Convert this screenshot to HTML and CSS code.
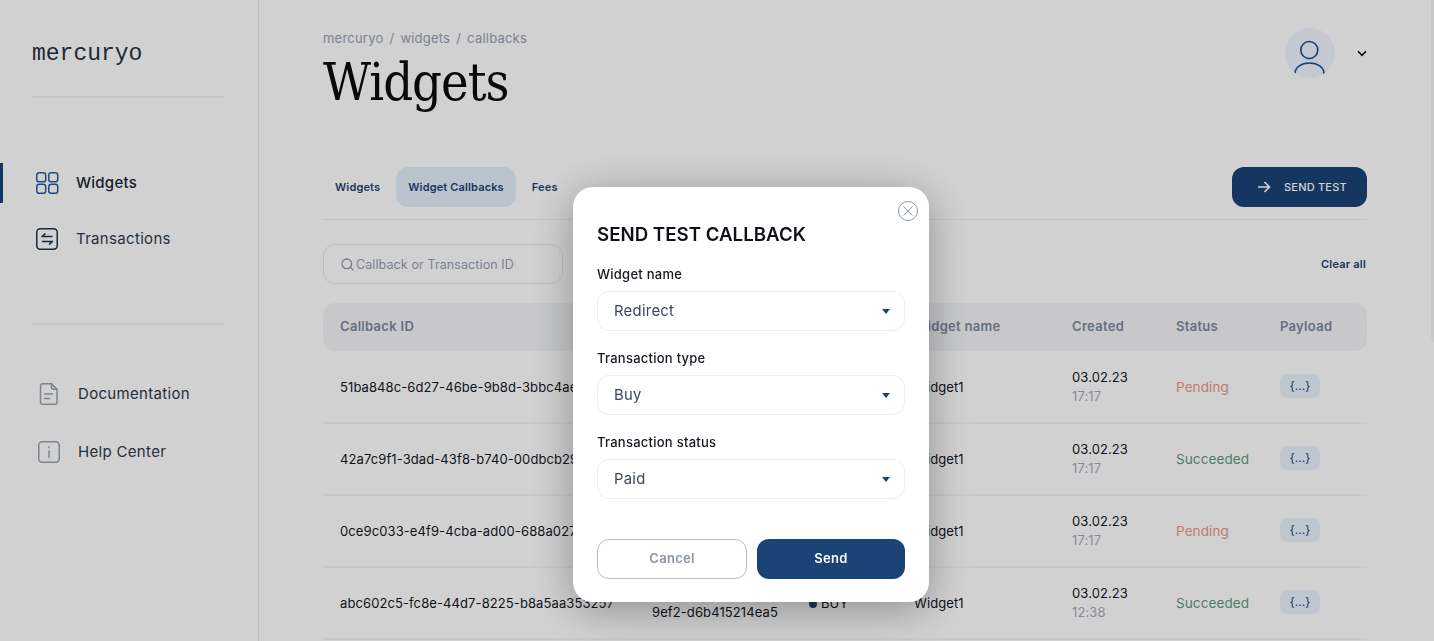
FILE: index.html
```html
<!DOCTYPE html>
<html lang="en">
<head>
<meta charset="utf-8">
<title>Widgets</title>
<link rel="stylesheet" href="styles.css">
</head>
<body>
<div class="app">
  <aside class="sidebar">
    <div class="logo">mercuryo</div>
    <hr class="side-rule">
    <nav class="nav nav-main">
      <a class="nav-item active">
        <svg class="nav-icon" width="24" height="24" viewBox="0 0 24 24" fill="none" stroke="#2b5c9c" stroke-width="1.5"><rect x="1.75" y="1.75" width="9" height="9" rx="2.6"/><rect x="13.75" y="1.75" width="9" height="9" rx="2.6"/><rect x="1.75" y="13.25" width="9" height="9" rx="2.6"/><rect x="13.75" y="13.25" width="9" height="9" rx="2.6"/></svg>
        <span>Widgets</span>
      </a>
      <a class="nav-item">
        <svg class="nav-icon" width="24" height="24" viewBox="0 0 24 24" fill="none" stroke="#1f3350" stroke-width="1.5"><rect x="1.75" y="1.75" width="20.5" height="20.5" rx="3.5"/><path d="M7 9.500h10M7 9.500l3-2.600M17.500 14.500h-10M17.500 14.500l-3 2.600" stroke-linecap="round" stroke-linejoin="round"/></svg>
        <span>Transactions</span>
      </a>
    </nav>
    <hr class="side-rule rule-second">
    <nav class="nav nav-secondary">
      <a class="nav-item small">
        <svg class="nav-icon" width="24" height="24" viewBox="0 0 24 24" fill="none" stroke="#98a0b2" stroke-width="1.5"><path d="M5.500 1.750h9l5.500 5.500v13a2 2 0 0 1-2 2h-12.500a2 2 0 0 1-2-2v-16.500a2 2 0 0 1 2-2z"/><path d="M14.500 1.750v3.500a2 2 0 0 0 2 2h3.500M7.500 12h8M7.500 16.500h5" stroke-linecap="round"/></svg>
        <span>Documentation</span>
      </a>
      <a class="nav-item small">
        <svg class="nav-icon" width="24" height="24" viewBox="0 0 24 24" fill="none" stroke="#98a0b2" stroke-width="1.500"><rect x="1.750" y="1.750" width="20.500" height="20.500" rx="3.500"/><path d="M12 11v6.500M12 6.800v1" stroke-linecap="round"/></svg>
        <span>Help Center</span>
      </a>
    </nav>
  </aside>

  <main class="main">
    <header class="page-head">
      <div>
        <div class="crumbs"><span>mercuryo</span><span>/</span><span>widgets</span><span>/</span><span>callbacks</span></div>
        <h1 class="title">Widgets</h1>
      </div>
      <div class="account">
        <div class="avatar">
          <svg width="50" height="50" viewBox="0 0 50 50" fill="none" stroke="#1f4f8e" stroke-width="1.600"><circle cx="24.300" cy="22" r="8.500"/><path d="M10 45.500c0-6.500 6.500-10.500 14.500-10.500s14.500 4 14.500 10.500" stroke-linecap="round"/></svg>
        </div>
        <svg class="chevron" width="10" height="7" viewBox="0 0 10 7" fill="none" stroke="#0c0c0c" stroke-width="1.600"><path d="M1 1.300l4 4 4-4"/></svg>
      </div>
    </header>

    <div class="tabbar">
      <div class="tabs">
        <a class="tab">Widgets</a>
        <a class="tab current">Widget Callbacks</a>
        <a class="tab">Fees</a>
      </div>
      <button class="send-test">
        <svg width="14" height="12" viewBox="0 0 14 12" fill="none" stroke="#fff" stroke-width="1.600"><path d="M1 6h11.500M7.500 1l5 5-5 5"/></svg>
        <span>SEND TEST</span>
      </button>
    </div>

    <div class="filters">
      <div class="search">
        <svg width="13" height="13" viewBox="0 0 13 13" fill="none" stroke="#8e96a8" stroke-width="1.300"><circle cx="5.800" cy="5.800" r="4.800"/><path d="M9.300 9.300l3 3"/></svg>
        <span>Callback or Transaction ID</span>
      </div>
      <a class="clear">Clear all</a>
    </div>

    <section class="table">
      <div class="row head">
        <div>Callback ID</div><div>Transaction ID</div><div>Type</div><div>Widget name</div><div>Created</div><div>Status</div><div>Payload</div>
      </div>
      <div class="row">
        <div>51ba848c-6d27-46be-9b8d-3bbc4ae1f2c7</div><div>7a1c40de-2b91-43a0-<br>8ce4-a1f07b63d2e9</div><div class="type">BUY</div><div>Widget1</div>
        <div class="when">03.02.23<small>17:17</small></div><div class="pending">Pending</div><div><span class="pill">{...}</span></div>
      </div>
      <div class="row">
        <div>42a7c9f1-3dad-43f8-b740-00dbcb29e6a1</div><div>c03e91b7-55ad-4f12-<br>a7d6-2e8c40f1b937</div><div class="type">BUY</div><div>Widget1</div>
        <div class="when">03.02.23<small>17:17</small></div><div class="ok">Succeeded</div><div><span class="pill">{...}</span></div>
      </div>
      <div class="row">
        <div>0ce9c033-e4f9-4cba-ad00-688a0277d4b5</div><div>e52d07a4-18cf-4b6e-<br>93fa-7bc1d046ae28</div><div class="type">BUY</div><div>Widget1</div>
        <div class="when">03.02.23<small>17:17</small></div><div class="pending">Pending</div><div><span class="pill">{...}</span></div>
      </div>
      <div class="row">
        <div>abc602c5-fc8e-44d7-8225-b8a5aa353257</div><div>8d14f6c2-70be-4a35-<br>9ef2-d6b415214ea5</div><div class="type">BUY</div><div>Widget1</div>
        <div class="when">03.02.23<small>12:38</small></div><div class="ok">Succeeded</div><div><span class="pill">{...}</span></div>
      </div>
    </section>
  </main>
</div>

<div class="overlay"></div>
<div class="scroll-thumb"></div>

<div class="modal">
  <button class="close" aria-label="Close">
    <svg width="20" height="20" viewBox="0 0 20 20" fill="none" stroke="#8d96aa" stroke-width="1"><circle cx="10" cy="10" r="9.500"/><path d="M5.500 5.500l9 9M14.500 5.500l-9 9"/></svg>
  </button>
  <h2 class="modal-title">SEND TEST CALLBACK</h2>
  <div class="field">
    <label class="field-label">Widget name</label>
    <div class="select"><span>Redirect</span><i class="caret"></i></div>
  </div>
  <div class="field">
    <label class="field-label">Transaction type</label>
    <div class="select"><span>Buy</span><i class="caret"></i></div>
  </div>
  <div class="field">
    <label class="field-label">Transaction status</label>
    <div class="select"><span>Paid</span><i class="caret"></i></div>
  </div>
  <div class="actions">
    <button class="btn cancel">Cancel</button>
    <button class="btn send">Send</button>
  </div>
</div>
</body>
</html>
```

FILE: styles.css
```css
* { box-sizing: border-box; }
html, body { margin: 0; height: 100%; overflow: hidden; }
body { background: #fff; color: #14181f; font-family: Inter, "Noto Sans", sans-serif; }
a { display: block; }
button { font-family: inherit; border: 0; padding: 0; background: none; }
hr { margin: 0; border: 0; }

.app { display: flex; height: 641px; }

/* sidebar */
.sidebar { width: 259px; flex: none; border-right: 1px solid #e8e8e8; padding-top: 38px; }
.logo { margin-left: 32px; height: 30px; font: 400 23px/32px "Liberation Mono", monospace; color: #263142; }
.side-rule { width: 193px; height: 2px; margin: 28px 0 0 32px; background: #f4f4f4; }
.rule-second { margin-top: 64px; }
.nav { display: flex; flex-direction: column; }
.nav-main { margin-top: 65px; gap: 16px; }
.nav-secondary { margin-top: 49px; gap: 18px; padding-left: 2px; }
.nav-item { display: flex; align-items: center; height: 40px; padding-left: 35px; border-left: 0 solid #1a4376; font-size: 15px; letter-spacing: .32px; color: #2f3a4a; }
.nav-item span { padding-bottom: 2px; }
.nav-item .nav-icon { margin-right: 17px; flex: none; }
.nav-item.active { padding-left: 32px; border-left-width: 3px; font-weight: 500; letter-spacing: .25px; color: #1c2635; }

/* main */
.main { flex: 1; min-width: 0; padding: 28px 67px 0 64px; }
.page-head { display: flex; justify-content: space-between; height: 139px; }
.crumbs { display: flex; gap: 6px; height: 20px; font-size: 13px; line-height: 20px; letter-spacing: .22px; color: #98a0b2; }
.title { margin: 2px 0 0; font: 400 52px/64px "DejaVu Serif Condensed", "DejaVu Serif", serif; letter-spacing: -1px; color: #0b0b0b; }
.account { display: flex; align-items: center; height: 50px; gap: 22px; }
.avatar { width: 50px; height: 50px; border-radius: 50%; background: #eff6ff; overflow: hidden; }
.avatar svg { display: block; }
.chevron { display: block; }

.tabbar { display: flex; justify-content: space-between; align-items: flex-start; height: 53px; border-bottom: 1px solid #f0f0f0; }
.tabs { display: flex; align-items: center; height: 40px; }
.tab { display: flex; align-items: center; height: 40px; padding: 0 12px; border-radius: 12px; font-size: 11px; font-weight: 600; letter-spacing: .15px; color: #1f4373; }
.tab.current { margin: 0 4px; background: #e3eefc; }
.send-test { display: flex; align-items: center; gap: 13px; width: 135px; height: 40px; padding-left: 25px; border-radius: 12px; background: #1a4376; color: #fff; font-size: 11px; font-weight: 500; letter-spacing: .2px; }

.filters { display: flex; justify-content: space-between; align-items: center; height: 40px; margin-top: 24px; }
.search { display: flex; align-items: center; gap: 2px; width: 240px; height: 40px; padding-left: 17px; border: 1px solid #eaeaea; border-radius: 12px; font-size: 12.500px; letter-spacing: .1px; color: #98a0b2; }
.clear { padding-right: 1px; font-size: 11px; font-weight: 600; letter-spacing: .2px; color: #1f4373; }

/* table */
.table { margin-top: 19px; }
.row { display: grid; grid-template-columns: 312px 157px 105px 158px 104px 104px 87px; align-items: center; height: 72px; padding-left: 17px; border-bottom: 2px solid #f5f5f5; font-size: 13px; letter-spacing: .1px; line-height: 18px; color: #14181f; white-space: nowrap; }
.row.head { height: 48px; margin-bottom: 1px; padding-bottom: 2px; border: 0; border-radius: 12px; background: #f4f5f7; font-size: 13px; font-weight: 600; letter-spacing: .3px; color: #7d879c; }
.type::before { content: ""; display: inline-block; width: 8px; height: 8px; margin-right: 4px; border-radius: 50%; background: #1a4376; }
.when { margin-bottom: 2px; }
.when small { display: block; margin-top: 1px; font-size: 13px; color: #a5adbd; }
.pending, .ok { font-size: 13.500px; }
.pending { color: #ec9a80; }
.ok { color: #5c9a7e; }
.pill { display: flex; align-items: center; justify-content: center; width: 40px; height: 24px; margin-bottom: 2px; border-radius: 8px; background: #e8f3fe; font-size: 12px; color: #1f4373; }

/* dim layer and scrollbar */
.overlay { position: fixed; inset: 0; background: rgba(0, 0, 0, .18); }
.scroll-thumb { position: fixed; top: 0; right: 0; width: 3px; height: 342px; background: #c8c8c8; border-radius: 0 0 0 3px; }

/* modal */
.modal { position: fixed; left: 573px; top: 187px; width: 356px; height: 415px; padding: 36px 24px 0; border-radius: 20px; background: #fff; box-shadow: 0 8px 44px rgba(0, 0, 0, .32); }
.close { position: absolute; top: 14px; right: 11px; width: 20px; height: 20px; }
.close svg { display: block; }
.modal-title { margin: 0 0 19px; font-size: 18.700px; font-weight: 600; line-height: 24px; color: #0e1116; }
.field { margin-bottom: 19px; }
.field-label { display: block; height: 16px; margin-bottom: 9px; font-size: 13px; font-weight: 500; line-height: 16px; letter-spacing: .25px; color: #14181f; }
.select { display: flex; justify-content: space-between; align-items: center; height: 40px; padding: 0 14px 0 16px; border: 1px solid #efefef; border-radius: 12px; font-size: 14.800px; letter-spacing: .3px; color: #3d4757; }
.select span { padding-bottom: 0; margin-top: -1px; }
.caret { width: 0; height: 0; border: 4.500px solid transparent; border-top: 5px solid #1a4376; border-bottom: 0; }
.actions { display: flex; gap: 10px; margin-top: 40px; }
.btn { flex: 1; height: 40px; padding-bottom: 2px; border-radius: 12px; font-size: 13px; font-weight: 600; letter-spacing: .3px; }
.cancel { border: 1px solid #b5bccb; background: #fff; color: #8a93a6; }
.send { background: #1a4376; color: #fff; }
```
